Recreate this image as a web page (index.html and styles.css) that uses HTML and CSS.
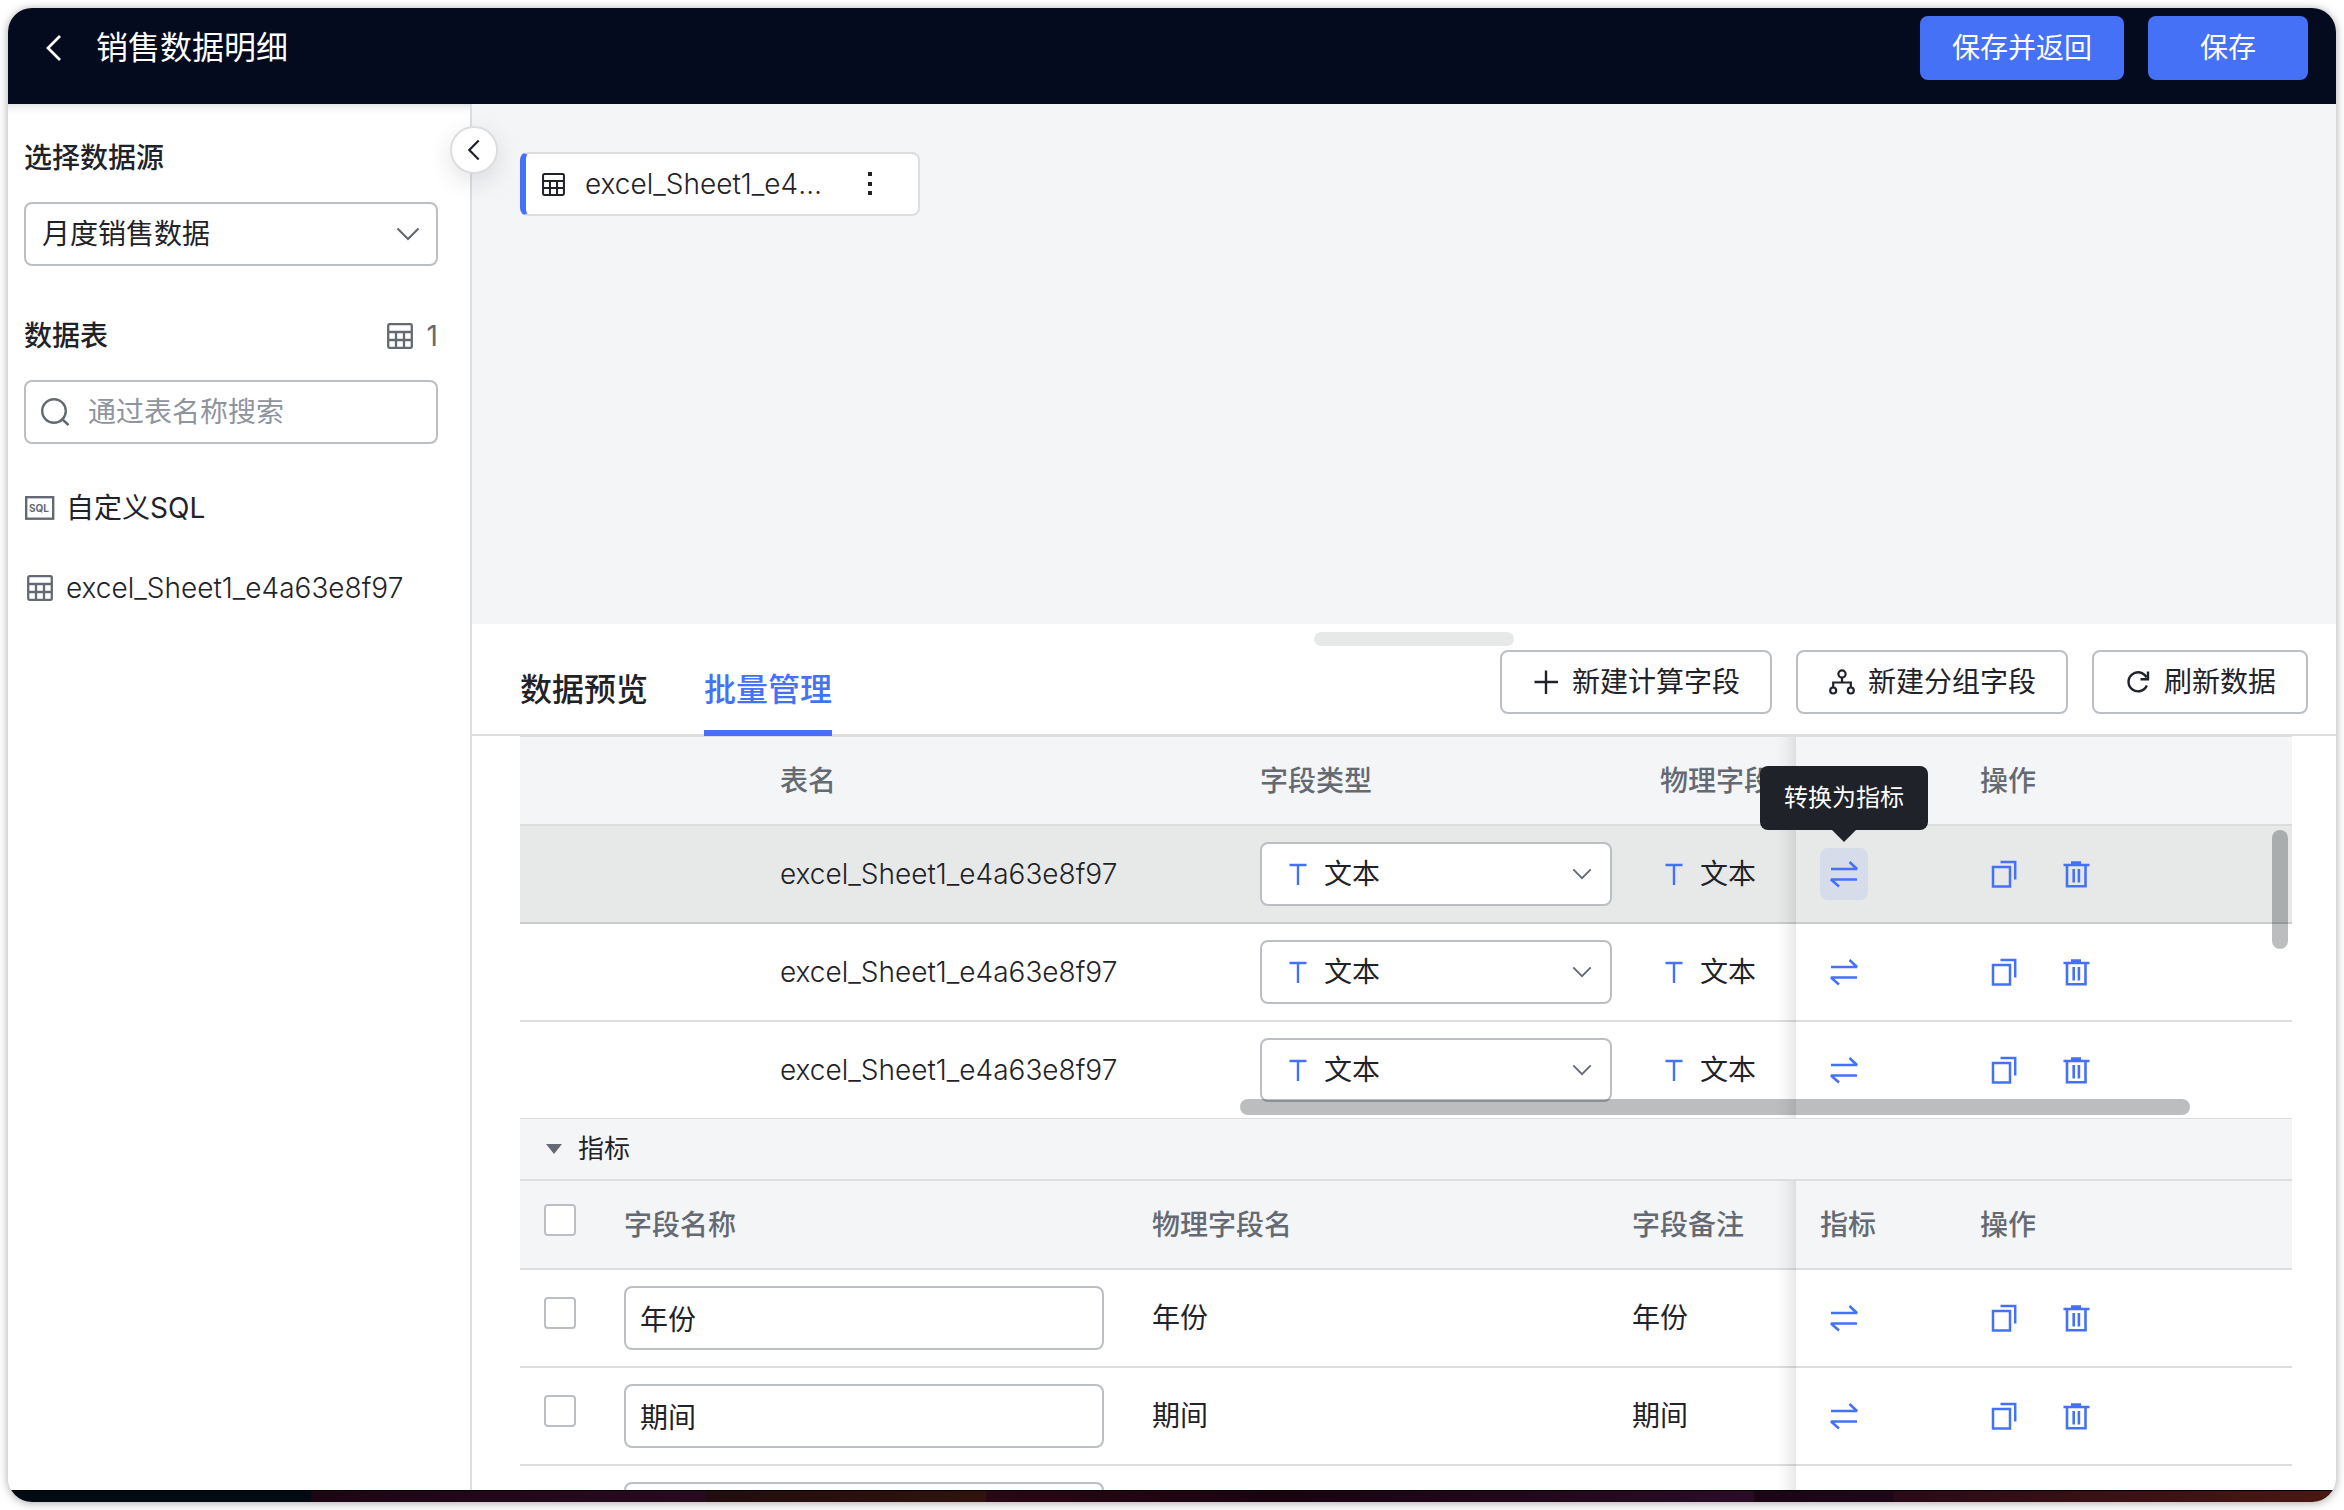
FILE: index.html
```html
<!DOCTYPE html>
<html lang="zh-CN">
<head>
<meta charset="utf-8">
<title>销售数据明细</title>
<link rel="stylesheet" href="styles.css">
</head>
<body>
<svg class="sprite" aria-hidden="true">
  <symbol id="i-table" viewBox="0 0 26 26"><g fill="none" stroke="currentColor" stroke-width="2.300"><rect x="1.200" y="1.200" width="23.600" height="23.600" rx="1.500"/><path d="M1 9h24M1 17h24M9 9v16M17 9v16"/></g></symbol>
  <symbol id="i-back" viewBox="0 0 28 28"><path d="M20 2 8 14l12 12" fill="none" stroke="currentColor" stroke-width="2.800"/></symbol>
  <symbol id="i-down" viewBox="0 0 24 24"><path d="M1.500 6.500 12 17 22.500 6.500" fill="none" stroke="currentColor" stroke-width="2.200"/></symbol>
  <symbol id="i-search" viewBox="0 0 28 28"><g fill="none" stroke="currentColor" stroke-width="2.400"><circle cx="13" cy="13" r="11.800"/><path d="m20.500 20.500 7 6.500"/></g></symbol>
  <symbol id="i-sql" viewBox="0 0 30 24"><rect x="1.200" y="1.200" width="27" height="21.500" fill="none" stroke="currentColor" stroke-width="2.400"/><text x="4" y="15.500" class="sql-mark" fill="currentColor">SQL</text></symbol>
  <symbol id="i-more" viewBox="0 0 24 24"><path d="M10 0h4v4h-4zM10 10h4v4h-4zM10 19h4v4h-4z" fill="currentColor"/></symbol>
  <symbol id="i-plus" viewBox="0 0 28 28"><path d="M2.500 14h23.500M14 2.500V26" fill="none" stroke="currentColor" stroke-width="2.400"/></symbol>
  <symbol id="i-group" viewBox="0 0 28 28"><g fill="none" stroke="currentColor" stroke-width="2.200"><circle cx="14" cy="6" r="3.600"/><circle cx="5.200" cy="22.500" r="3"/><circle cx="22.800" cy="22.500" r="3"/><path d="M14 9.500v5M5.200 19.500v-5h17.600v5"/></g></symbol>
  <symbol id="i-refresh" viewBox="0 0 28 28"><path d="M22.800 17.500A9.500 9.500 0 1 1 22.500 9.500M24 3.500v7.800h-7.500" fill="none" stroke="currentColor" stroke-width="2.400"/></symbol>
  <symbol id="i-swap" viewBox="0 0 28 28"><path d="M1 9h26l-7.500-7M27 19.500H1l8 7" fill="none" stroke="currentColor" stroke-width="2.500" stroke-linejoin="bevel"/></symbol>
  <symbol id="i-copy" viewBox="0 0 28 28"><path d="M3 7h17v19.500H3zM10.500 2h14.700v17.500" fill="none" stroke="currentColor" stroke-width="2.500"/></symbol>
  <symbol id="i-trash" viewBox="0 0 28 28"><path d="M1.500 5h26M9 2.500h10M5 5v21.200h18.500V5M11.700 9v13.500M16.900 9v13.500" fill="none" stroke="currentColor" stroke-width="2.600"/></symbol>
  <symbol id="i-text" viewBox="0 0 20 24"><path d="M1.500 3h17M10 3v20" fill="none" stroke="currentColor" stroke-width="2.400"/></symbol>
  <symbol id="i-caret" viewBox="0 0 16 10"><path d="M0 0h16L8 10z" fill="currentColor"/></symbol>
</svg>

<div class="window">
  <header class="topbar">
    <button class="back" aria-label="返回"><svg><use href="#i-back"/></svg></button>
    <h1>销售数据明细</h1>
    <button class="primary">保存并返回</button>
    <button class="primary save">保存</button>
  </header>

  <div class="main">
    <aside class="sidebar">
      <label class="label" for="source">选择数据源</label>
      <div class="field">
        <select id="source"><option>月度销售数据</option></select>
        <svg class="chevron"><use href="#i-down"/></svg>
      </div>
      <div class="tables-head">
        <label class="label" for="search">数据表</label>
        <span class="count"><svg class="i26"><use href="#i-table"/></svg>1</span>
      </div>
      <div class="field search">
        <input id="search" type="text" placeholder="通过表名称搜索">
        <svg class="magnifier"><use href="#i-search"/></svg>
      </div>
      <ul class="sources">
        <li><span class="slot"><svg class="sql"><use href="#i-sql"/></svg></span>自定义SQL</li>
        <li><span class="slot"><svg class="i26"><use href="#i-table"/></svg></span><span class="file">excel_Sheet1_e4a63e8f97</span></li>
      </ul>
      <button class="collapse" aria-label="收起"><svg><use href="#i-back"/></svg></button>
    </aside>

    <section class="content">
      <div class="canvas">
        <div class="node">
          <svg><use href="#i-table"/></svg>
          <span class="node-name file">excel_Sheet1_e4a63e8f97</span>
          <button aria-label="更多"><svg><use href="#i-more"/></svg></button>
        </div>
      </div>

      <div class="panel">
        <div class="handle"></div>
        <div class="toolbar">
          <nav class="tabs">
            <a href="#preview">数据预览</a>
            <a href="#batch" class="active">批量管理</a>
          </nav>
          <div class="actions">
            <button class="outline"><svg><use href="#i-plus"/></svg>新建计算字段</button>
            <button class="outline"><svg><use href="#i-group"/></svg>新建分组字段</button>
            <button class="outline"><svg><use href="#i-refresh"/></svg>刷新数据</button>
          </div>
        </div>

        <div class="grids">
          <div class="grid dimension">
            <table>
              <colgroup><col class="c-lead"><col class="c-wide"><col class="c-type"><col><col class="c-swap"><col class="c-ops"></colgroup>
              <thead><tr><th></th><th>表名</th><th>字段类型</th><th class="clip">物理字段类型</th><th></th><th>操作</th></tr></thead>
              <tbody>
                <tr class="hovered">
                  <td></td><td class="file">excel_Sheet1_e4a63e8f97</td>
                  <td><div class="field typed"><select aria-label="字段类型"><option>文本</option></select><svg class="type-icon"><use href="#i-text"/></svg><svg class="chevron"><use href="#i-down"/></svg></div></td>
                  <td class="clip"><span class="type"><svg class="type-icon"><use href="#i-text"/></svg>文本</span></td>
                  <td><span class="swap"><button class="icon lit" aria-label="转换为指标"><svg><use href="#i-swap"/></svg></button><span class="tooltip" role="tooltip">转换为指标</span></span></td>
                  <td><span class="ops"><button class="icon" aria-label="复制"><svg><use href="#i-copy"/></svg></button><button class="icon" aria-label="删除"><svg><use href="#i-trash"/></svg></button></span></td>
                </tr>
                <tr>
                  <td></td><td class="file">excel_Sheet1_e4a63e8f97</td>
                  <td><div class="field typed"><select aria-label="字段类型"><option>文本</option></select><svg class="type-icon"><use href="#i-text"/></svg><svg class="chevron"><use href="#i-down"/></svg></div></td>
                  <td class="clip"><span class="type"><svg class="type-icon"><use href="#i-text"/></svg>文本</span></td>
                  <td><span class="swap"><button class="icon" aria-label="转换为指标"><svg><use href="#i-swap"/></svg></button></span></td>
                  <td><span class="ops"><button class="icon" aria-label="复制"><svg><use href="#i-copy"/></svg></button><button class="icon" aria-label="删除"><svg><use href="#i-trash"/></svg></button></span></td>
                </tr>
                <tr>
                  <td></td><td class="file">excel_Sheet1_e4a63e8f97</td>
                  <td><div class="field typed"><select aria-label="字段类型"><option>文本</option></select><svg class="type-icon"><use href="#i-text"/></svg><svg class="chevron"><use href="#i-down"/></svg></div></td>
                  <td class="clip"><span class="type"><svg class="type-icon"><use href="#i-text"/></svg>文本</span></td>
                  <td><span class="swap"><button class="icon" aria-label="转换为指标"><svg><use href="#i-swap"/></svg></button></span></td>
                  <td><span class="ops"><button class="icon" aria-label="复制"><svg><use href="#i-copy"/></svg></button><button class="icon" aria-label="删除"><svg><use href="#i-trash"/></svg></button></span></td>
                </tr>
              </tbody>
            </table>
            <div class="edge"></div>
            <div class="thumb-y"></div>
            <div class="thumb-x"></div>
          </div>

          <button class="group-title"><svg><use href="#i-caret"/></svg>指标</button>

          <div class="grid">
            <table>
              <colgroup><col class="c-check"><col class="c-name"><col class="c-wide"><col><col class="c-swap"><col class="c-ops"></colgroup>
              <thead><tr><th class="check"><input type="checkbox" aria-label="全选"></th><th>字段名称</th><th>物理字段名</th><th class="clip">字段备注</th><th>指标</th><th>操作</th></tr></thead>
              <tbody>
                <tr>
                  <td class="check"><input type="checkbox" aria-label="选择年份"></td>
                  <td><input class="name" type="text" value="年份" aria-label="字段名称"></td><td>年份</td><td>年份</td>
                  <td><span class="swap"><button class="icon" aria-label="转换为维度"><svg><use href="#i-swap"/></svg></button></span></td>
                  <td><span class="ops"><button class="icon" aria-label="复制"><svg><use href="#i-copy"/></svg></button><button class="icon" aria-label="删除"><svg><use href="#i-trash"/></svg></button></span></td>
                </tr>
                <tr>
                  <td class="check"><input type="checkbox" aria-label="选择期间"></td>
                  <td><input class="name" type="text" value="期间" aria-label="字段名称"></td><td>期间</td><td>期间</td>
                  <td><span class="swap"><button class="icon" aria-label="转换为维度"><svg><use href="#i-swap"/></svg></button></span></td>
                  <td><span class="ops"><button class="icon" aria-label="复制"><svg><use href="#i-copy"/></svg></button><button class="icon" aria-label="删除"><svg><use href="#i-trash"/></svg></button></span></td>
                </tr>
                <tr>
                  <td></td>
                  <td><input class="name" type="text" aria-label="字段名称"></td><td></td><td></td><td></td><td></td>
                </tr>
              </tbody>
            </table>
            <div class="edge"></div>
          </div>
        </div>
      </div>
    </section>
  </div>
  <div class="desktop-strip"></div>
</div>
</body>
</html>
```

FILE: styles.css
```css
:root {
  --text: #1f2329;
  --muted: #646a73;
  --line: #dcdddf;
  --control: #bbbfc4;
  --blue: #4571f7;
  --surface: #f4f5f7;
}

* { box-sizing: border-box; }

body {
  margin: 0;
  padding: 8px;
  background: #fff;
  color: var(--text);
  font: 28px/40px Inter, "Noto Sans CJK SC", sans-serif;
}

button, input, select { font: inherit; color: inherit; }
button { margin: 0; padding: 0; border: 0; background: none; cursor: pointer; }
svg { display: block; flex: none; }
a { color: inherit; text-decoration: none; }
.sprite { position: absolute; width: 0; height: 0; }
.file { font-weight: 300; }

.window {
  display: flex;
  flex-direction: column;
  height: calc(100vh - 16px);
  overflow: hidden;
  border-radius: 24px;
  background: #fff;
  box-shadow: 0 1px 10px rgba(0, 0, 0, 0.35);
}

/* Top bar */
.topbar {
  display: flex;
  align-items: flex-start;
  flex: none;
  gap: 24px;
  height: 96px;
  padding: 8px 28px;
  background: #050b1e;
  color: #fff;
}
.back { display: grid; place-items: center; width: 36px; height: 64px; }
.back svg { width: 28px; height: 28px; }
.topbar h1 { flex: 1; margin: 0; font-size: 32px; font-weight: 400; line-height: 64px; }
.primary { height: 64px; padding: 0 32px; border-radius: 8px; background: var(--blue); white-space: nowrap; }
.save { min-width: 160px; }

.main { display: flex; flex: 1; min-height: 0; }

/* Sidebar */
.sidebar {
  position: relative;
  z-index: 1;
  flex: none;
  width: 464px;
  padding: 34px 32px 0 16px;
  border-right: 2px solid var(--line);
  background: #fff;
  box-shadow: inset 0 12px 12px -12px rgba(0, 0, 0, 0.2);
}
.label { display: block; font-weight: 500; }
.field { display: grid; align-items: center; margin-top: 24px; }
.field > * { grid-area: 1 / 1; }
.field select, .field input, .name {
  width: 100%;
  height: 64px;
  padding: 0 16px;
  border: 2px solid var(--control);
  border-radius: 8px;
  background: #fff;
  appearance: none;
  outline: 0;
}
.field svg { pointer-events: none; }
.chevron { justify-self: end; width: 24px; height: 24px; margin-right: 18px; color: var(--muted); }
.tables-head { display: flex; align-items: center; justify-content: space-between; margin-top: 50px; }
.count { display: flex; align-items: center; gap: 14px; color: var(--muted); }
.i26 { width: 26px; height: 26px; }
.search input { padding-left: 62px; }
.search input::placeholder { color: #8f959e; opacity: 1; }
.magnifier { width: 28px; height: 28px; margin-left: 17px; color: var(--muted); }
.sources { display: grid; gap: 40px; margin: 44px 0 0; padding: 0; list-style: none; }
.sources li { display: flex; align-items: center; gap: 10px; white-space: nowrap; }
.slot { display: grid; place-items: center; width: 32px; color: var(--muted); }
.sql { width: 30px; height: 24px; }
.sql-mark { font: 700 10px Inter, sans-serif; }
.collapse {
  position: absolute;
  top: 22px;
  right: -28px;
  display: grid;
  place-items: center;
  width: 48px;
  height: 48px;
  border: 2px solid var(--line);
  border-radius: 50%;
  background: #fff;
  box-shadow: 0 8px 24px rgba(31, 35, 41, 0.12);
}
.collapse svg { width: 22px; height: 22px; }

/* Canvas */
.content { display: flex; flex: 1; flex-direction: column; min-width: 0; }
.canvas { flex: 0 0 520px; padding: 48px; background: var(--surface); }
.node {
  display: flex;
  align-items: center;
  width: 400px;
  height: 64px;
  padding: 0 24px 0 16px;
  border: 2px solid var(--line);
  border-left: 6px solid var(--blue);
  border-radius: 8px;
  background: #fff;
}
.node > svg { width: 23px; height: 23px; }
.node-name { flex: 1; margin: 0 14px 0 20px; overflow: hidden; text-overflow: ellipsis; white-space: nowrap; }
.node button { display: grid; place-items: center; width: 48px; height: 48px; }
.node button svg { width: 24px; height: 24px; }

/* Lower panel */
.panel { display: flex; flex: 1; flex-direction: column; min-height: 0; padding-top: 8px; }
.handle { flex: none; width: 200px; height: 14px; margin-left: calc(50% - 90px); border-radius: 7px; background: #e7e9e8; }
.toolbar {
  display: flex;
  flex: none;
  justify-content: space-between;
  height: 90px;
  padding: 0 28px 0 48px;
  border-bottom: 2px solid var(--line);
}
.tabs { display: flex; gap: 56px; height: 90px; }
.tabs a { padding-top: 24px; font-size: 32px; font-weight: 500; border-bottom: 6px solid transparent; }
.tabs .active { color: var(--blue); border-color: var(--blue); position: relative; z-index: 1; }
.actions { display: flex; gap: 24px; padding-top: 4px; }
.outline {
  display: flex;
  align-items: center;
  gap: 12px;
  height: 64px;
  padding: 0 30px;
  border: 2px solid var(--control);
  border-radius: 8px;
  white-space: nowrap;
}
.outline svg { width: 28px; height: 28px; }

/* Field grids */
.grids { flex: 1; min-height: 0; padding: 0 44px 0 48px; overflow: hidden; }
.grid { position: relative; overflow: hidden; }
.dimension { height: 383px; margin-top: -1px; border-top: 2px solid rgba(0, 0, 0, 0.13); }
table { width: 100%; border-spacing: 0; table-layout: fixed; }
th, td { height: 98px; padding: 0 24px; border-bottom: 2px solid var(--line); text-align: left; white-space: nowrap; }
th { height: 89px; background: var(--surface); color: var(--muted); font-weight: 500; }
.clip { padding-right: 0; overflow: hidden; }
.hovered td { background: #e7e9e8; border-color: #c9cbcc; }
.c-lead { width: 236px; }
.c-check { width: 80px; }
.c-name { width: 528px; }
.c-wide { width: 480px; }
.c-type { width: 400px; }
.c-swap { width: 160px; }
.c-ops { width: 336px; }
td .field { margin: 0; }
.name { padding: 0 14px; }
.typed select { padding-left: 62px; }
.typed .chevron { width: 20px; height: 20px; margin-right: 20px; }
.type-icon { width: 20px; height: 24px; color: var(--blue); }
.typed .type-icon { margin-left: 28px; }
.type { display: flex; align-items: center; gap: 16px; padding-left: 4px; }
.swap { position: relative; display: block; width: 48px; }
.ops { display: flex; gap: 24px; }
.icon { display: grid; place-items: center; width: 48px; height: 52px; border-radius: 8px; color: var(--blue); }
.icon svg { width: 28px; height: 28px; }
.lit { background: #d6dcea; }
.tooltip {
  position: absolute;
  z-index: 3;
  bottom: 70px;
  left: -60px;
  width: 168px;
  border-radius: 8px;
  background: var(--text);
  color: #fff;
  font-size: 24px;
  line-height: 64px;
  text-align: center;
}
.tooltip::after {
  content: "";
  position: absolute;
  top: 100%;
  left: 72px;
  border: 12px solid transparent;
  border-top-color: var(--text);
  border-bottom: 0;
}
.edge {
  position: absolute;
  top: 0;
  right: 496px;
  bottom: 0;
  width: 20px;
  background: linear-gradient(to left, rgba(0, 0, 0, 0.09), rgba(0, 0, 0, 0.03) 50%, transparent);
}
.thumb-y, .thumb-x { position: absolute; z-index: 1; border-radius: 8px; background: rgba(31, 35, 41, 0.3); }
.thumb-y { top: 93px; right: 4px; width: 16px; height: 119px; }
.thumb-x { right: 102px; bottom: 3px; width: 950px; height: 16px; }
.group-title {
  display: flex;
  align-items: center;
  gap: 16px;
  width: 100%;
  height: 63px;
  padding: 0 26px;
  border-top: 1px solid var(--line);
  border-bottom: 2px solid var(--line);
  background: var(--surface);
  font-size: 26px;
}
.group-title svg { width: 16px; height: 10px; color: var(--muted); }
th.check, td.check { padding-bottom: 10px; }
.check input {
  display: block;
  width: 32px;
  height: 32px;
  margin: 0;
  border: 2px solid var(--control);
  border-radius: 4px;
  background: #fff;
  appearance: none;
}

/* Sliver of wallpaper under the window content */
.desktop-strip {
  flex: none;
  height: 12px;
  border-top: 1px solid #000;
  background: linear-gradient(to right,
    #030a12 13%, #1d0614 13%, #280a20 30%,
    #210d0f 30%, #30130c 42%,
    #2a0714 42%, #190410 55%, #2a0c28 75%,
    #1c0616 75%, #1e0718 81%,
    #2a0a18 81%, #4a1812);
}
```
